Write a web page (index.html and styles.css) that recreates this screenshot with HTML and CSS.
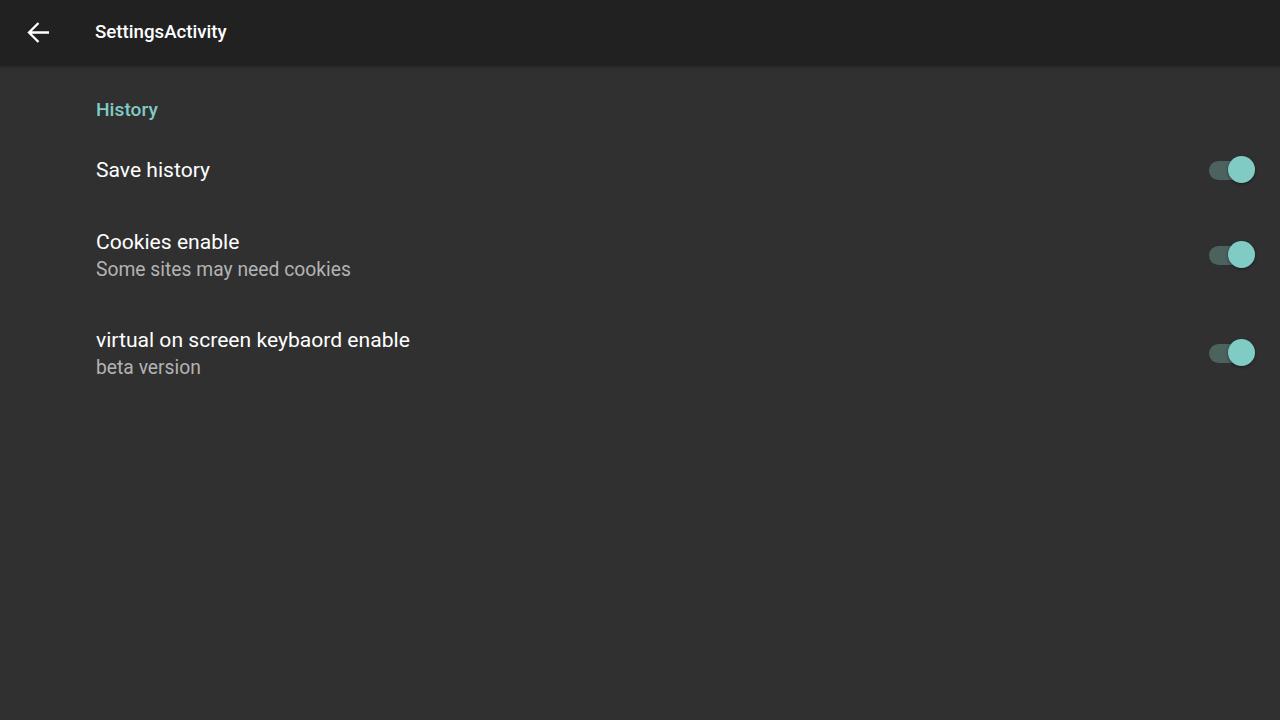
FILE: index.html
```html
<!DOCTYPE html>
<html>
<head>
<meta charset="utf-8">
<link rel="stylesheet" href="styles.css">
</head>
<body>
<header class="toolbar">
  <button class="back" aria-label="Back">
    <svg viewBox="0 0 33 33" width="33" height="33"><path fill="none" stroke="#fff" stroke-width="2.3" stroke-linejoin="miter" d="M27 16.5H7M16.5 7L7 16.5l9.5 9.5"/></svg>
  </button>
  <h1 class="title">SettingsActivity</h1>
</header>
<main class="prefs">
  <div class="category">History</div>
  <div class="pref single">
    <div class="texts"><div class="ptitle">Save history</div></div>
    <div class="switch on"><span class="track"></span><span class="thumb"></span></div>
  </div>
  <div class="pref">
    <div class="texts"><div class="ptitle">Cookies enable</div><div class="summary">Some sites may need cookies</div></div>
    <div class="switch on"><span class="track"></span><span class="thumb"></span></div>
  </div>
  <div class="pref">
    <div class="texts"><div class="ptitle">virtual on screen keybaord enable</div><div class="summary">beta version</div></div>
    <div class="switch on"><span class="track"></span><span class="thumb"></span></div>
  </div>
</main>
</body>
</html>
```
FILE: styles.css
```css
html, body { margin: 0; padding: 0; }
body {
  width: 1280px; height: 720px; overflow: hidden;
  background: #303030;
  font-family: Roboto, "Noto Sans", sans-serif;
  color: #fff;
}
.toolbar {
  height: 66px;
  box-sizing: border-box;
  padding-bottom: 2px;
  background: #212121;
  display: flex;
  align-items: center;
  box-shadow: 0 1px 3px rgba(0,0,0,0.25);
  position: relative;
}
.back {
  width: 33px; height: 33px;
  margin-left: 22px;
  padding: 0; border: 0; background: none;
  display: flex;
}
.title {
  margin: 0 0 0 40px;
  font-size: 18.7px;
  font-weight: 500;
  color: #fff;
}
.prefs { padding: 0 23px 0 96px; }
.category {
  color: #80cbc4;
  font-size: 19.2px;
  font-weight: 500;
  padding-top: 33px;
  height: 68px;
  line-height: 22px;
  box-sizing: border-box;
}
.pref {
  display: flex;
  align-items: center;
  justify-content: space-between;
  height: 98px;
}
.pref.single { height: 71px; }
.texts { padding-top: 3px; }
.pref.single .texts { padding-top: 1px; }
.ptitle { font-size: 21.1px; line-height: 28px; color: #fff; }
.summary { font-size: 19.3px; line-height: 26px; margin-top: 1px; color: #b3b3b3; }
.switch { position: relative; width: 48px; height: 28px; margin-top: 1px; }
.pref.single .switch { margin-top: 0; }
.track {
  position: absolute; left: 0; top: 5px;
  width: 46px; height: 19px; border-radius: 10px;
  background: #4b625f;
}
.thumb {
  position: absolute; left: 19px; top: 0;
  width: 27px; height: 27px; border-radius: 50%;
  background: #80cbc4;
  box-shadow: 0 1px 3px rgba(0,0,0,0.45);
}
```
